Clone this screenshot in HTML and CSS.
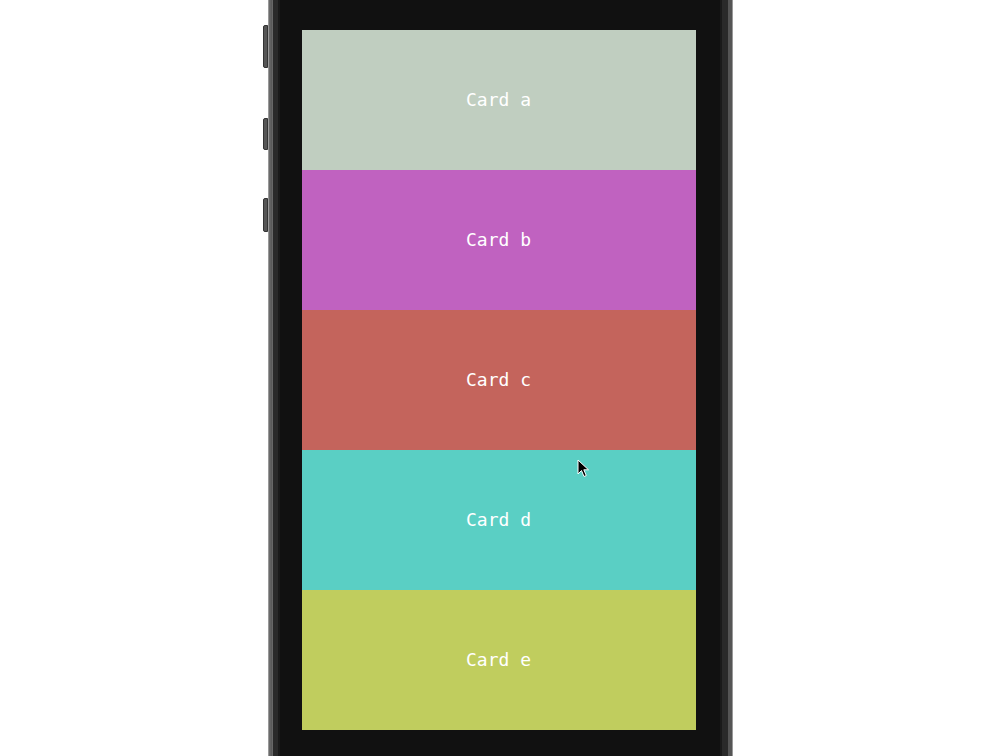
FILE: index.html
```html
<!DOCTYPE html>
<html>
<head>
<meta charset="utf-8">
<link rel="stylesheet" href="styles.css">
</head>
<body>
<div class="stage">
  <div class="phone">
    <span class="side-btn btn1"></span>
    <span class="side-btn btn2"></span>
    <span class="side-btn btn3"></span>
    <div class="rim">
      <div class="body">
        <div class="screen">
          <div class="card card-a">Card a</div>
          <div class="card card-b">Card b</div>
          <div class="card card-c">Card c</div>
          <div class="card card-d">Card d</div>
          <div class="card card-e">Card e</div>
        </div>
      </div>
    </div>
  </div>
  <svg class="cursor" width="14" height="20" viewBox="0 0 14 20">
    <path d="M1 1 L1 15 L4.5 11.5 L7 17.5 L9.3 16.5 L6.8 10.8 L11.5 10.8 Z" fill="#000" stroke="#fff" stroke-width="1"/>
  </svg>
</div>
</body>
</html>
```
FILE: styles.css
```css
html, body {
  margin: 0;
  padding: 0;
  background: #fff;
}
.stage {
  position: relative;
  width: 1000px;
  height: 756px;
  overflow: hidden;
  display: flex;
  justify-content: center;
}
.phone {
  position: relative;
  width: 465px;
  height: 756px;
}
.rim {
  height: 100%;
  box-sizing: border-box;
  padding: 0 4px;
  background: linear-gradient(to right, #4a4a4a 0, #8a8a8a 1px, #3a3a3a 2px, #7a7a7a 3px, #555 4px);
  border-left: 1px solid #999;
  border-right: 1px solid #999;
}
.body {
  height: 100%;
  box-sizing: border-box;
  background: #111;
  border-left: 5px solid #2a2a2a;
  border-right: 6px solid #2a2a2a;
  padding: 30px 21px 26px 24px;
  box-shadow: inset 2px 0 0 #1a1a1a, inset -2px 0 0 #1a1a1a;
}
.screen {
  width: 394px;
  display: flex;
  flex-direction: column;
}
.card {
  height: 140px;
  box-sizing: border-box;
  padding-bottom: 2px;
  display: flex;
  align-items: center;
  justify-content: center;
  color: #fff;
  font-family: "DejaVu Sans Mono", "Liberation Mono", monospace;
  font-size: 18px;
}
.card-a { background: #c0cec0; }
.card-b { background: #c062c0; }
.card-c { background: #c4645c; }
.card-d { background: #5acfc4; }
.card-e { background: #c0cd5e; }
.side-btn {
  position: absolute;
  left: -5px;
  width: 5px;
  background: #555;
  border-radius: 2px 0 0 2px;
  border: 1px solid #333;
  box-sizing: border-box;
}
.btn1 { top: 25px; height: 43px; }
.btn2 { top: 118px; height: 32px; }
.btn3 { top: 198px; height: 34px; }
.cursor {
  position: absolute;
  left: 577px;
  top: 459px;
}
```
